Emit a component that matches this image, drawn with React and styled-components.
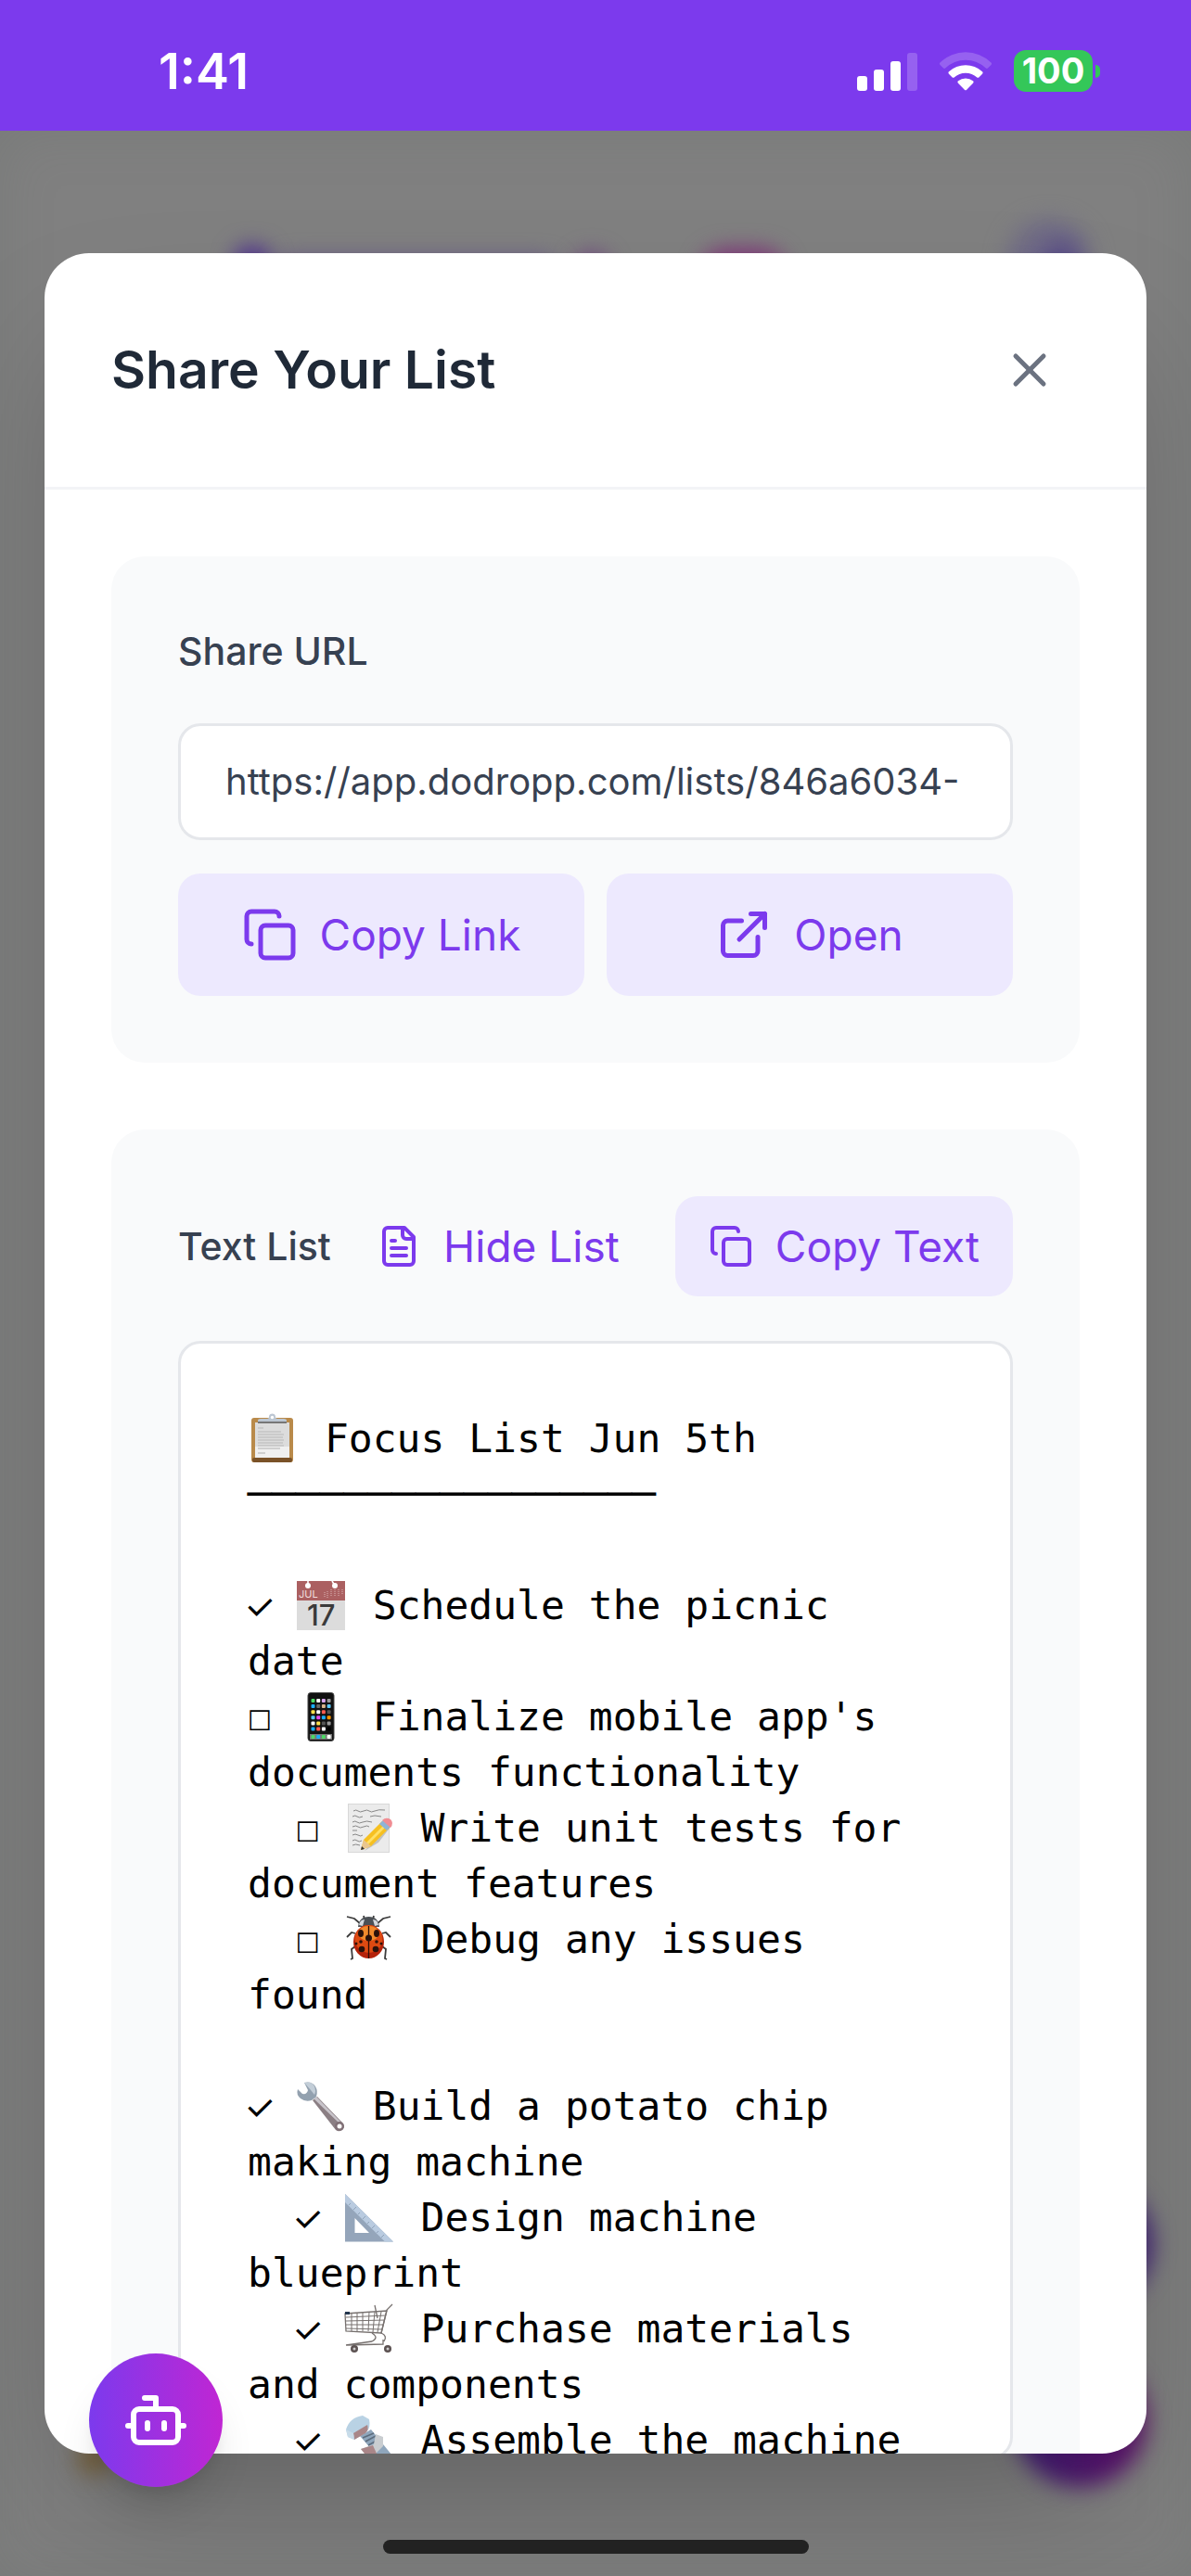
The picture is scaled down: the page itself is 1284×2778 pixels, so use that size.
import React from "react";
import styled, { createGlobalStyle, css } from "styled-components";

const sans = 'Inter, "Open Sans", "Liberation Sans", sans-serif';
const mono = '"DejaVu Sans Mono", "Liberation Mono", monospace';

const GlobalStyle = createGlobalStyle`
  *, *::before, *::after { box-sizing: border-box; }
  body { margin: 0; background: #808080; font-family: ${sans}; }
  button, input { font-family: inherit; }
`;

/* ---------- page frame ---------- */

const Screen = styled.div`
  display: flex;
  flex-direction: column;
  height: 100vh;
  overflow: hidden;
`;

const StatusBar = styled.header`
  display: flex;
  flex: none;
  align-items: center;
  justify-content: space-between;
  height: 141px;
  padding: 12px 98px 0 171px;
  background: #7c3aed;
  color: #fff;
`;

const Clock = styled.time`
  font-size: 54px;
  font-weight: 600;
  line-height: 60px;
`;

const StatusIcons = styled.div`
  display: flex;
  align-items: center;
  gap: 23px;
`;

const Battery = styled.div`
  display: flex;
  align-items: center;
  gap: 3px;
`;

const BatteryBody = styled.span`
  display: flex;
  align-items: center;
  justify-content: center;
  width: 85px;
  height: 45px;
  border-radius: 13px;
  background: #34c759;
  font-size: 38px;
  font-weight: 700;
  line-height: 45px;
`;

const BatteryTip = styled.span`
  width: 5px;
  height: 14px;
  border-radius: 0 5px 5px 0;
  background: #34c759;
`;

const Overlay = styled.main`
  position: relative;
  display: flex;
  flex: 1;
  align-items: center;
  justify-content: center;
  min-height: 0;
  padding: 0 48px;
  overflow: hidden;
  background: #808080;
  box-shadow: inset 0 0 60px rgba(90, 100, 95, 0.18);
`;

const Glow = styled.span`
  position: absolute;
  left: ${(p) => p.$left};
  right: ${(p) => p.$right};
  top: ${(p) => p.$top};
  bottom: ${(p) => p.$bottom};
  width: ${(p) => p.$w}px;
  height: ${(p) => p.$h}px;
  border-radius: 72px;
  background: ${(p) => p.$fill};
  filter: blur(12px);
`;

const Dialog = styled.section`
  position: relative;
  display: flex;
  flex-direction: column;
  width: 100%;
  max-width: 1344px;
  max-height: 90%;
  overflow: hidden;
  border-radius: 48px;
  background: #fff;
  box-shadow: 0 75px 150px -36px rgba(0, 0, 0, 0.25);
`;

const DialogHeader = styled.div`
  display: flex;
  flex: none;
  align-items: center;
  justify-content: space-between;
  padding: 72px;
  border-bottom: 3px solid #f3f4f6;
`;

const Title = styled.h2`
  margin: 0;
  color: #1f2937;
  font-size: 57px;
  font-weight: 600;
  line-height: 84px;
`;

const IconButton = styled.button`
  display: flex;
  padding: 24px;
  border: 0;
  border-radius: 24px;
  background: transparent;
  color: #6b7280;
`;

const DialogBody = styled.div`
  display: flex;
  flex-direction: column;
  gap: 72px;
  min-height: 0;
  padding: 72px;
  overflow: hidden;
`;

/* ---------- cards ---------- */

const Card = styled.div`
  display: flex;
  flex: none;
  flex-direction: column;
  padding: 72px;
  border-radius: 36px;
  background: #f9fafb;
`;

const labelText = css`
  color: #374151;
  font-size: 41px;
  font-weight: 500;
  line-height: 60px;
  white-space: nowrap;
`;

const FieldLabel = styled.label`
  ${labelText}
  margin-bottom: 48px;
`;

const SectionLabel = styled.h3`
  ${labelText}
  margin: 0;
`;

const UrlInput = styled.input`
  width: 100%;
  height: 126px;
  margin-bottom: 36px;
  padding: 0 48px;
  border: 3px solid #e5e7eb;
  border-radius: 24px;
  outline: none;
  background: #fff;
  color: #374151;
  font-size: 40px;
`;

const ActionGrid = styled.div`
  display: grid;
  grid-template-columns: 1fr 1fr;
  gap: 24px;
`;

const Action = styled.button`
  display: flex;
  align-items: center;
  justify-content: center;
  gap: 24px;
  height: ${(p) => (p.$compact ? 108 : 132)}px;
  padding: 0 36px;
  border: 0;
  border-radius: 24px;
  background: ${(p) => (p.$plain ? "transparent" : "#ede9fe")};
  color: #7c3aed;
  font-size: 46px;
  line-height: 72px;
  white-space: nowrap;
`;

const ListHeader = styled.div`
  display: flex;
  align-items: center;
  justify-content: space-between;
  margin-bottom: 48px;
`;

const ListActions = styled.div`
  display: flex;
  gap: 24px;
`;

const ListText = styled.pre`
  height: 1206px;
  margin: 0;
  padding: 72px;
  overflow: hidden;
  border: 3px solid #e5e7eb;
  border-radius: 24px;
  background: #fff;
  color: #000;
  font-family: ${mono};
  font-size: 43px;
  line-height: 60px;
  white-space: pre-wrap;
`;

const Mark = styled.span`
  display: inline-flex;
  justify-content: center;
  width: 26px;
  font-family: ${(p) => (p.$done ? sans : mono)};
  font-size: ${(p) => (p.$done ? 38 : 43)}px;
  line-height: 48px;
`;

const EmojiArt = styled.svg`
  width: 53px;
  height: 53px;
  margin-right: 4px;
  overflow: visible;
  vertical-align: -12px;
`;

/* ---------- floating parts ---------- */

const AssistantButton = styled.button`
  position: fixed;
  left: 96px;
  bottom: 96px;
  display: flex;
  align-items: center;
  justify-content: center;
  width: 144px;
  height: 144px;
  padding: 0;
  border: 0;
  border-radius: 50%;
  background: linear-gradient(to right, #7c3aed, #c026d3);
  color: #fff;
  box-shadow: 0 30px 45px -9px rgba(0, 0, 0, 0.12), 0 12px 18px -6px rgba(0, 0, 0, 0.08);
`;

const HomeIndicator = styled.div`
  position: fixed;
  bottom: 24px;
  left: 50%;
  width: 459px;
  height: 15px;
  margin-left: -229px;
  border-radius: 8px;
  background: #222;
`;

/* ---------- line icons ---------- */

const Icon = ({ size, children }) => (
  <svg
    width={size}
    height={size}
    viewBox="0 0 24 24"
    fill="none"
    stroke="currentColor"
    strokeWidth="2"
    strokeLinecap="round"
    strokeLinejoin="round"
    aria-hidden="true"
  >
    {children}
  </svg>
);

const CloseIcon = () => (
  <Icon size={60}>
    <path d="M18 6 6 18" />
    <path d="m6 6 12 12" />
  </Icon>
);

const CopyIcon = ({ size }) => (
  <Icon size={size}>
    <rect width="14" height="14" x="8" y="8" rx="2" />
    <path d="M4 16c-1.1 0-2-.9-2-2V4c0-1.1.9-2 2-2h10c1.1 0 2 .9 2 2" />
  </Icon>
);

const OpenIcon = () => (
  <Icon size={60}>
    <path d="M15 3h6v6" />
    <path d="M10 14 21 3" />
    <path d="M18 13v6a2 2 0 0 1-2 2H5a2 2 0 0 1-2-2V8a2 2 0 0 1 2-2h6" />
  </Icon>
);

const FileIcon = () => (
  <Icon size={48}>
    <path d="M15 2H6a2 2 0 0 0-2 2v16a2 2 0 0 0 2 2h12a2 2 0 0 0 2-2V7Z" />
    <path d="M14 2v4a2 2 0 0 0 2 2h4" />
    <path d="M10 9H8" />
    <path d="M16 13H8" />
    <path d="M16 17H8" />
  </Icon>
);

const BotIcon = () => (
  <Icon size={72}>
    <path d="M12 8V4H8" />
    <rect width="16" height="12" x="4" y="8" rx="2" />
    <path d="M2 14h2" />
    <path d="M20 14h2" />
    <path d="M15 13v2" />
    <path d="M9 13v2" />
  </Icon>
);

const SignalIcon = () => (
  <svg width="65" height="42" viewBox="0 0 65 42" fill="#fff" aria-hidden="true">
    <rect x="0" y="26" width="11" height="16" rx="3" />
    <rect x="18" y="19" width="11" height="23" rx="3" />
    <rect x="36" y="10" width="11" height="32" rx="3" />
    <rect x="54" y="1" width="11" height="41" rx="3" opacity="0.2" />
  </svg>
);

const WifiIcon = () => (
  <svg width="58" height="42" viewBox="0 0 58 42" fill="#fff" aria-hidden="true">
    <path opacity="0.2" d="M1.5 11.5a39.5 39.5 0 0 1 55 0c.8.8.8 1.6 0 2.4l-3.6 3.6c-.6.6-1.4.6-2 0a31.5 31.5 0 0 0-43.8 0c-.6.6-1.4.6-2 0l-3.6-3.6c-.8-.8-.8-1.6 0-2.4z" />
    <path d="M11 21.3a26.5 26.5 0 0 1 36 0c.8.8.8 1.6 0 2.4l-3.7 3.7c-.6.6-1.4.6-2 0a18.3 18.3 0 0 0-24.6 0c-.6.6-1.4.6-2 0L11 23.7c-.8-.8-.8-1.6 0-2.4z" />
    <path d="M21 31.3a13 13 0 0 1 16 0c.8.8.8 1.6 0 2.4l-6.8 7c-.8.8-1.6.8-2.4 0l-6.8-7c-.8-.8-.8-1.6 0-2.4z" />
  </svg>
);

/* ---------- pictographs used in the list ---------- */

const phoneDots = [
  ["#4cd964", "#fff", "#d9a6f0", "#999"],
  ["#1badf8", "#666", "#d8b48c", "#5ac8fa"],
  ["#ffe04b", "#fff", "#ff5b50", "#555"],
  ["#5ac8fa", "#e64cf0", "#1badf8", "#ff9500"],
  ["#fff", "#ffe04b", "#555", "#999"],
  ["#1badf8", "#ff5b50", "#fff", "#000"],
];

const art = {
  clipboard: (
    <>
      <rect x="4" y="4" width="45" height="48" rx="3" fill="#b98a4a" />
      <rect x="5" y="47" width="43" height="5" rx="2" fill="#7a5228" />
      <rect x="8" y="9" width="37" height="38" fill="#dcdcdc" />
      <path d="M8 35h37v12H8z" fill="#f0f0f0" />
      <path d="M11 15h6M11 19h25M11 22h28M11 25h27M11 28h28M11 31h27M11 34h28M11 37h24M11 42h8" stroke="#c4c4c4" strokeWidth="1.4" />
      <path d="M11 9V7q0-2 3-2h7q2 0 2-2a3.5 3.5 0 0 1 7 0q0 2 2 2h7q3 0 3 2v2z" fill="#bcc6d2" />
      <path d="M11 8h31v2H11z" fill="#777" />
      <circle cx="26.5" cy="3.5" r="1.7" fill="#fff" />
    </>
  ),
  calendar: (
    <>
      <rect x="1" y="0" width="52" height="53" fill="#dcdcdc" />
      <path d="M1 0h52v21H1z" fill="#ab6061" />
      <circle cx="13" cy="5" r="3" fill="#fff" />
      <circle cx="42" cy="5" r="3" fill="#fff" />
      <path d="M13 0v5M39 0l3 5" stroke="#fff" strokeWidth="1.6" />
      <path d="M31 12v6M34 11v7M38 9v8M42 9v8M46 9v7M50 9v6" stroke="#c99" strokeWidth="1.5" strokeDasharray="1 1" />
      <text x="3" y="18" fontFamily={sans} fontSize="11" fill="#f0dede">JUL</text>
      <text x="12" y="48" fontFamily={sans} fontSize="31" fontWeight="500" fill="#3a3a3a">17</text>
    </>
  ),
  phone: (
    <>
      <rect x="13" y="0.5" width="28" height="52" rx="3" fill="#111" stroke="#444" />
      {phoneDots.map((row, y) =>
        row.map((c, x) => (
          <rect key={`${x}-${y}`} x={16.5 + x * 5.7} y={7 + y * 6.1} width="4" height="4" rx="1" fill={c} />
        ))
      )}
      <rect x="15" y="45" width="24" height="6" fill="#777" />
      {["#4cd964", "#1badf8", "#4cd964", "#fff"].map((c, x) => (
        <rect key={x} x={16.5 + x * 5.7} y="46" width="4" height="4" rx="1" fill={c} />
      ))}
    </>
  ),
  memo: (
    <>
      <rect x="4.5" y="0.5" width="44" height="52" fill="#ebebeb" stroke="#d8d8d8" />
      <path d="M10 8q3-2 5 0t6 0 6 0 6 0 11-1M9 14q3-2 5 0t6 0M28 14q4-2 12 0M9 20q3-2 5 0t6 0 10 0M9 25q4-2 6 0t6 0 6 0M9 29h5M9 34q3-2 6 0t5 0M9 40q3-2 5 0t5 0M9 45q3-2 8 0" fill="none" stroke="#888" />
      <path d="M22 51l15-9 14-18-2-3z" fill="#999" opacity="0.5" />
      <path d="M18 50l3-11 20-20 8 7-20 20z" fill="#f6c021" />
      <path d="M24 42l20-20 2 2-20 20z" fill="#ffe066" />
      <path d="M18 50l3-11 8 7z" fill="#e9c68f" />
      <path d="M18 50l1-4 3 3z" fill="#333" />
      <path d="M38 22l4-4 8 7-4 4z" fill="#8fb4d6" />
      <path d="M41 18q4-4 9-1 4 4 0 9z" fill="#f08d93" />
    </>
  ),
  beetle: (
    <>
      <path d="M18 10L11 4 3 2M35 10l7-6 8-2M12 20l-4-1-5 5M41 20l4-1 5 5M12 34l-4 3 1 10-2 1M41 34l4 3-1 10 2 1M22 5l-1-4M31 5l1-4" fill="none" stroke="#3b3b3b" strokeWidth="1.8" />
      <path d="M15 13q1-11 11.5-11T38 13z" fill="#4b5055" />
      <path d="M16 11q1-6 6-6l-2 7zM37 11q-1-6-6-6l2 7z" fill="#d5d9dd" />
      <ellipse cx="26.5" cy="29" rx="16.5" ry="18" fill="#b5230b" />
      <ellipse cx="26.5" cy="26" rx="15" ry="15" fill="#dd4a12" />
      <ellipse cx="26.5" cy="20" rx="11" ry="8" fill="#f08a2c" />
      <path d="M26.5 12v35" stroke="#2b0d05" strokeWidth="1.3" />
      <g fill="#2b120b">
        <ellipse cx="18" cy="20" rx="3" ry="4" />
        <ellipse cx="35" cy="20" rx="3" ry="4" />
        <circle cx="26.5" cy="25" r="3.5" />
        <circle cx="18" cy="29" r="1.8" />
        <circle cx="35" cy="29" r="1.8" />
        <circle cx="19" cy="37" r="3.3" />
        <circle cx="34" cy="37" r="3.3" />
        <circle cx="13" cy="31" r="1.5" />
        <circle cx="40" cy="31" r="1.5" />
      </g>
    </>
  ),
  wrench: (
    <>
      <path d="M18 20l5-4 27 28a5 5 0 0 1-7 8z" fill="#8b7f84" />
      <path d="M19 18l3-2 26 27-2 1z" fill="#c8c4ca" />
      <path d="M9 1q8-2 12 4 3 5 1 11l-5 4q-7 2-12-2Q0 14 2 8l5 5q5 1 6-4z" fill="#93a1af" />
      <path d="M9 1q8-2 11 4 2 5 0 9l-4-5z" fill="#c3ced8" />
      <circle cx="47" cy="48" r="5" fill="#807076" />
      <circle cx="47" cy="48" r="2.5" fill="#fff" />
    </>
  ),
  ruler: (
    <>
      <path fillRule="evenodd" d="M1 1l52 51.5H1zM11.5 27v16H27z" fill="#94a5ba" />
      <path d="M1 1l52 51.5h-9L1 10z" fill="#b9cbe0" />
      <path d="M5 13l2-2M10 18l3-3M15 23l2-2M20 28l3-3M25 33l2-2M30 38l3-3M35 43l2-2M40 48l3-3" stroke="#8fa3ba" />
    </>
  ),
  cart: (
    <g fill="none" stroke="#77716f" strokeWidth="1.3">
      <path d="M1 10l45-3-6 24-38-2z" />
      <path d="M2 14l43-2M2 18l42-1M2 22l41 0M2 26l39 1M8 10v19M14 9v20M20 9v20M27 8l-1 21M33 8l-2 22M40 8l-4 22" strokeWidth="1" />
      <path d="M52 0l-6 6-6 25q7 3 3 9M33 1l3 14M30 31q8 5 0 9L2 44M2 44l40-1V38" />
      <path d="M1 8h5v3H1z" fill="#23364d" stroke="none" />
      <circle cx="11" cy="48" r="4" fill="#5c5252" stroke="none" />
      <circle cx="47" cy="48" r="4" fill="#5c5252" stroke="none" />
      <circle cx="11" cy="48" r="1.5" fill="#ccc" stroke="none" />
      <circle cx="47" cy="48" r="1.5" fill="#ccc" stroke="none" />
    </g>
  ),
  bolt: (
    <>
      <path d="M17 22l12-7 22 27-8 10z" fill="#8fa6bc" />
      <path d="M20 24l12-5M23 28l11-6M26 32l11-6" stroke="#5d6d7d" strokeWidth="1.5" />
      <path d="M2 15Q6 2 20 0l7 4q2 9-3 14l-13 8-7-3z" fill="#b9d2e4" />
      <path d="M10 19l15-9q2 5-2 9l-12 7z" fill="#a98688" />
      <path d="M2 15l8 4 1 7-7-3z" fill="#c9dce9" />
      <path d="M18 36l14-5 2-11 8 3v10l-9 9-11-1z" fill="#c9cdd0" />
      <path d="M18 36l13-4 4 9-4 11z" fill="#a98688" />
    </>
  ),
};

const Emoji = ({ name }) => (
  <EmojiArt viewBox="0 0 53 53" role="img" aria-label={name}>
    {art[name]}
  </EmojiArt>
);

const items = [
  { done: true, icon: "calendar", text: "Schedule the picnic date" },
  { icon: "phone", text: "Finalize mobile app's documents functionality" },
  { icon: "memo", text: "Write unit tests for document features", nested: true },
  { icon: "beetle", text: "Debug any issues found", nested: true, last: true },
  { done: true, icon: "wrench", text: "Build a potato chip making machine" },
  { done: true, icon: "ruler", text: "Design machine blueprint", nested: true },
  { done: true, icon: "cart", text: "Purchase materials and components", nested: true },
  { done: true, icon: "bolt", text: "Assemble the machine", nested: true },
];

export default function App() {
  return (
    <Screen>
      <GlobalStyle />
      <StatusBar>
        <Clock>1:41</Clock>
        <StatusIcons>
          <SignalIcon />
          <WifiIcon />
          <Battery>
            <BatteryBody>100</BatteryBody>
            <BatteryTip />
          </Battery>
        </StatusIcons>
      </StatusBar>

      <Overlay>
        <Glow $left="252px" $top="124px" $w={40} $h={40} $fill="#4b2a90" />
        <Glow $left="300px" $top="138px" $w={300} $h={30} $fill="#63508a" />
        <Glow $left="620px" $top="132px" $w={36} $h={40} $fill="#6c3a80" />
        <Glow $left="756px" $top="128px" $w={90} $h={50} $fill="#7e3078" />
        <Glow $right="108px" $top="96px" $w={90} $h={110} $fill="#6f6a86" />
        <Glow $right="122px" $top="120px" $w={36} $h={50} $fill="#574a86" />
        <Glow $right="42px" $bottom="286px" $w={144} $h={144} $fill="#3e1d77" />
        <Glow $right="48px" $bottom="96px" $w={144} $h={144} $fill="linear-gradient(to right, #3e1d77, #600f6a)" />
        <Glow $left="84px" $bottom="110px" $w={36} $h={36} $fill="#7a6238" />
        <Dialog role="dialog" aria-labelledby="share-title">
          <DialogHeader>
            <Title id="share-title">Share Your List</Title>
            <IconButton type="button" aria-label="Close">
              <CloseIcon />
            </IconButton>
          </DialogHeader>
          <DialogBody>
            <Card>
              <FieldLabel htmlFor="share-url">Share URL</FieldLabel>
              <UrlInput id="share-url" type="text" readOnly value="https://app.dodropp.com/lists/846a6034-" />
              <ActionGrid>
                <Action type="button">
                  <CopyIcon size={60} />
                  Copy Link
                </Action>
                <Action type="button">
                  <OpenIcon />
                  Open
                </Action>
              </ActionGrid>
            </Card>
            <Card>
              <ListHeader>
                <SectionLabel>Text List</SectionLabel>
                <ListActions>
                  <Action type="button" $compact $plain>
                    <FileIcon />
                    Hide List
                  </Action>
                  <Action type="button" $compact>
                    <CopyIcon size={48} />
                    Copy Text
                  </Action>
                </ListActions>
              </ListHeader>
              <ListText>
                <Emoji name="clipboard" />
                {` Focus List Jun 5th\n${"─".repeat(17)}\n\n`}
                {items.map((item) => (
                  <React.Fragment key={item.icon}>
                    {item.nested ? "  " : ""}
                    <Mark $done={item.done}>{item.done ? "✓" : "☐"}</Mark>{" "}
                    <Emoji name={item.icon} />
                    {` ${item.text}${item.last ? "\n\n" : "\n"}`}
                  </React.Fragment>
                ))}
              </ListText>
            </Card>
          </DialogBody>
        </Dialog>
      </Overlay>

      <AssistantButton type="button" aria-label="Assistant">
        <BotIcon />
      </AssistantButton>
      <HomeIndicator />
    </Screen>
  );
}
